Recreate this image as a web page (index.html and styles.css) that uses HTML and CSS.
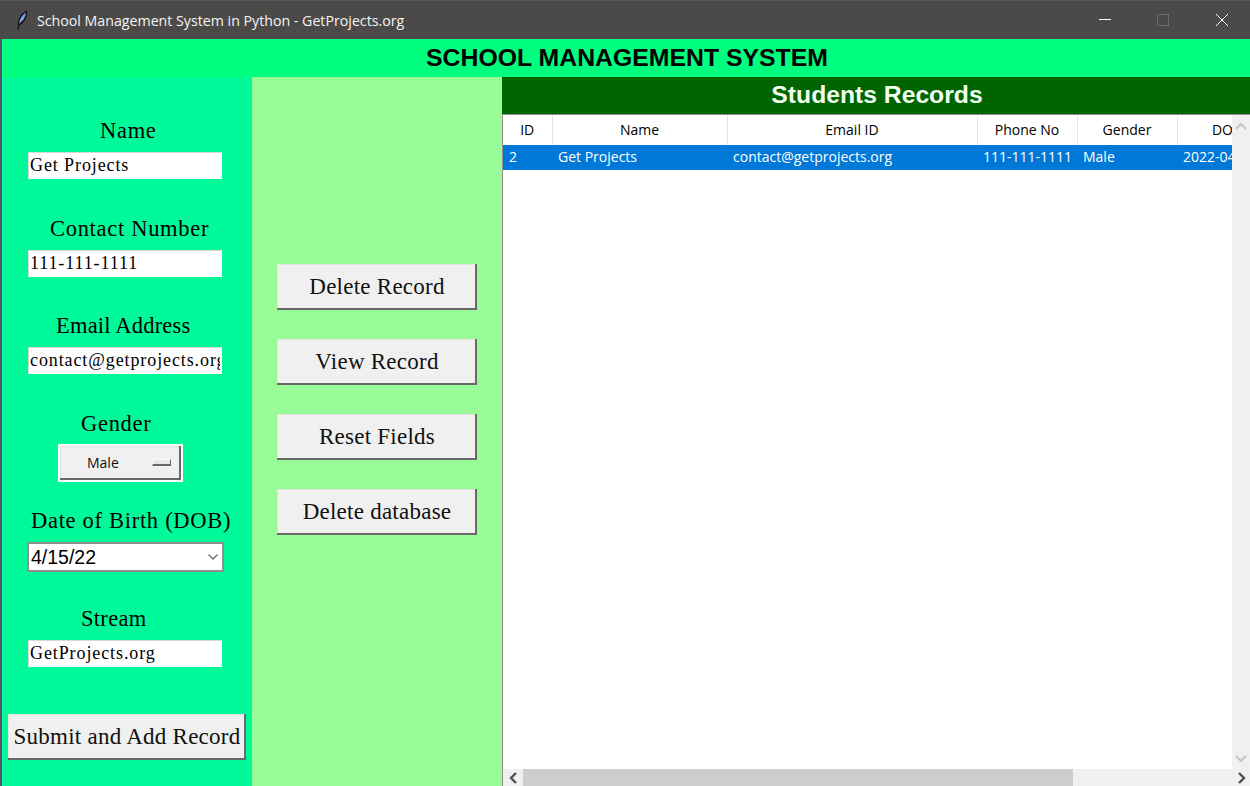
FILE: index.html
```html
<!DOCTYPE html>
<html lang="en">
<head>
    <meta charset="UTF-8">
    <meta name="viewport" content="width=device-width, initial-scale=1.0">
    <title>School Management System in Python - GetProjects.org</title>
    <link rel="stylesheet" href="styles.css">
</head>
<body>
    <div class="titlebar">
        <svg class="app-icon" width="12" height="20" viewBox="0 0 12 20">
            <path d="M1.500 19.500 L2 15 C1.500 9 5 3 11 0.500 C11.800 6 9 12.500 3.500 15.500 L2.500 19.500 Z" fill="#10131c"/>
            <path d="M3 13.500 C3.500 9 6 5 9.800 2.500 C9.800 6.500 7.500 11 3 13.500 Z" fill="#7fa3dc"/>
        </svg>
        <span class="title-text">School Management System in Python - GetProjects.org</span>
        <div class="win-buttons">
            <span class="win-btn">
                <svg width="14" height="14" viewBox="0 0 14 14"><path d="M2 6.500 H14" stroke="#fff" stroke-width="1"/></svg>
            </span>
            <span class="win-btn">
                <svg width="14" height="14" viewBox="0 0 14 14"><rect x="1.500" y="1.500" width="11" height="11" fill="none" stroke="#6e6c6a"/></svg>
            </span>
            <span class="win-btn">
                <svg width="14" height="14" viewBox="0 0 14 14"><path d="M1 1 L13 13 M13 1 L1 13" stroke="#fff" stroke-width="1"/></svg>
            </span>
        </div>
    </div>

    <div class="window">
        <h1 class="app-header">SCHOOL MANAGEMENT SYSTEM</h1>

        <div class="main">
            <div class="form-panel">
                <div class="field">
                    <label class="field-label label-name">Name</label>
                    <input class="field-input" type="text" value="Get Projects">
                </div>
                <div class="field">
                    <label class="field-label label-contact">Contact Number</label>
                    <input class="field-input" type="text" value="111-111-1111">
                </div>
                <div class="field">
                    <label class="field-label label-email">Email Address</label>
                    <input class="field-input" type="text" value="contact@getprojects.org">
                </div>
                <div class="field">
                    <label class="field-label label-gender">Gender</label>
                    <div class="option-menu">
                        <span class="option-value">Male</span>
                        <span class="option-mark"></span>
                    </div>
                </div>
                <div class="field">
                    <label class="field-label label-dob">Date of Birth (DOB)</label>
                    <div class="date-box">
                        <span>4/15/22</span>
                        <svg width="12" height="8" viewBox="0 0 12 8"><path d="M1.500 1.500 L6 6 L10.500 1.500" fill="none" stroke="#6a6a6a" stroke-width="1.300"/></svg>
                    </div>
                </div>
                <div class="field">
                    <label class="field-label label-stream">Stream</label>
                    <input class="field-input" type="text" value="GetProjects.org">
                </div>
                <button class="tk-btn submit-btn">Submit and Add Record</button>
            </div>

            <div class="action-panel">
                <button class="tk-btn action-btn">Delete Record</button>
                <button class="tk-btn action-btn">View Record</button>
                <button class="tk-btn action-btn">Reset Fields</button>
                <button class="tk-btn action-btn">Delete database</button>
            </div>

            <div class="records-panel">
                <div class="records-header">Students Records</div>
                <div class="tree-wrap">
                    <div class="tree-view">
                        <table class="tree">
                            <thead>
                                <tr>
                                    <th class="col-id">ID</th>
                                    <th class="col-name">Name</th>
                                    <th class="col-email">Email ID</th>
                                    <th class="col-phone">Phone No</th>
                                    <th class="col-gender">Gender</th>
                                    <th class="col-dob">DOB</th>
                                </tr>
                            </thead>
                            <tbody>
                                <tr class="selected">
                                    <td>2</td>
                                    <td>Get Projects</td>
                                    <td>contact@getprojects.org</td>
                                    <td>111-111-1111</td>
                                    <td>Male</td>
                                    <td>2022-04-15</td>
                                </tr>
                            </tbody>
                        </table>
                    </div>
                    <div class="vscroll">
                        <svg width="12" height="8" viewBox="0 0 12 8"><path d="M1 7 L6 2 L11 7" fill="none" stroke="#c4c4c4" stroke-width="2"/></svg>
                        <svg width="12" height="8" viewBox="0 0 12 8"><path d="M1 1 L6 6 L11 1" fill="none" stroke="#c4c4c4" stroke-width="2"/></svg>
                    </div>
                </div>
                <div class="hscroll">
                    <span class="hscroll-btn">
                        <svg width="10" height="12" viewBox="0 0 10 12"><path d="M8 1 L3 6 L8 11" fill="none" stroke="#505050" stroke-width="2.400"/></svg>
                    </span>
                    <span class="hscroll-thumb"></span>
                    <span class="hscroll-btn hscroll-end">
                        <svg width="10" height="12" viewBox="0 0 10 12"><path d="M2 1 L7 6 L2 11" fill="none" stroke="#505050" stroke-width="2.400"/></svg>
                    </span>
                </div>
            </div>
        </div>
    </div>
</body>
</html>
```

FILE: styles.css
```css
* {
    box-sizing: border-box;
}

html, body {
    height: 100%;
}

body {
    margin: 0;
    width: 1250px;
    height: 786px;
    overflow: hidden;
    display: flex;
    flex-direction: column;
    background: #00fa9a;
    font-family: "Liberation Serif", serif;
}

.titlebar {
    height: 39px;
    flex: none;
    display: flex;
    align-items: center;
    padding-left: 16px;
    background: #4c4a48;
    border-top: 1px solid #5c5a58;
    color: #fff;
    font-family: "Open Sans", sans-serif;
    font-size: 14.200px;
}

.app-icon {
    margin-right: 9px;
}

.title-text {
    color: #f4f4f4;
}

.win-buttons {
    margin-left: auto;
    margin-right: -1px;
    display: flex;
}

.win-btn {
    width: 59px;
    height: 38px;
    display: flex;
    align-items: center;
    justify-content: center;
}

.window {
    flex: 1;
    min-height: 0;
    display: flex;
    flex-direction: column;
    border-left: 2px solid #5f4d6b;
}

.app-header {
    height: 38px;
    flex: none;
    margin: 0;
    padding-left: 2px;
    background: #00ff7f;
    color: #000;
    font-family: "Liberation Sans", sans-serif;
    font-size: 24.800px;
    font-weight: bold;
    line-height: 37px;
    text-align: center;
}

.main {
    flex: 1;
    min-height: 0;
    display: flex;
}

.form-panel {
    width: 250px;
    flex: none;
    padding-top: 41px;
    background: #00fa9a;
    display: flex;
    flex-direction: column;
}

.field {
    height: 97.600px;
    flex: none;
    display: flex;
    flex-direction: column;
    align-items: flex-start;
}

.field-label {
    height: 34px;
    font-size: 22.500px;
    letter-spacing: 0.700px;
    line-height: 26px;
    color: #000;
    white-space: nowrap;
}

.label-name { margin-left: 98px; }
.label-contact { margin-left: 48px; }
.label-email { margin-left: 54px; letter-spacing: 0.200px; }
.label-gender { margin-left: 79px; }
.label-dob { margin-left: 29px; }
.label-stream { margin-left: 79px; letter-spacing: 0.300px; }

.field-input {
    width: 194px;
    height: 27px;
    margin-left: 26px;
    padding: 0 1px;
    border: 1px solid #d8d8d8;
    border-bottom-color: #fff;
    border-right-color: #fff;
    background: #fff;
    color: #000;
    font-family: "Liberation Serif", serif;
    font-size: 18px;
    letter-spacing: 0.900px;
    outline: none;
}

.option-menu {
    width: 125px;
    height: 38px;
    margin-left: 56px;
    margin-top: -1px;
    padding-left: 27px;
    padding-right: 10px;
    display: flex;
    align-items: center;
    justify-content: space-between;
    background: #f0f0f0;
    border: 2px solid #fff;
    box-shadow: inset -2px -2px 0 #696969, inset 1px 1px 0 #e3e3e3;
    font-family: "Open Sans", sans-serif;
    font-size: 14px;
    color: #111;
}

.option-mark {
    width: 19px;
    height: 7px;
    background: #e8e8e8;
    border: 1px solid #f8f8f8;
    border-right-color: #696969;
    border-bottom: 2px solid #696969;
}

.date-box {
    width: 197px;
    height: 30px;
    margin-left: 25px;
    padding: 0 3px 0 2px;
    display: flex;
    align-items: center;
    justify-content: space-between;
    background: #fff;
    border: 2px solid #8f8f8f;
    font-family: "Liberation Sans", sans-serif;
    font-size: 19.500px;
    color: #000;
}

.tk-btn {
    background: #f0f0f0;
    border: none;
    padding: 0;
    box-shadow: inset -2px -2px 0 #696969, inset 1px 1px 0 #e3e3e3;
    color: #111;
    font-family: "Liberation Serif", serif;
    font-size: 23px;
    letter-spacing: 0.250px;
    white-space: nowrap;
}

.submit-btn {
    width: 238px;
    height: 46px;
    margin-left: 6px;
    margin-top: 10px;
}

.action-panel {
    width: 250px;
    flex: none;
    padding: 187px 25px 0;
    background: #98fb98;
    display: flex;
    flex-direction: column;
    gap: 29px;
}

.action-btn {
    width: 200px;
    height: 46px;
    flex: none;
}

.records-panel {
    flex: 1;
    min-width: 0;
    display: flex;
    flex-direction: column;
    background: #fff;
}

.records-header {
    height: 37px;
    flex: none;
    padding-left: 2px;
    background: #006400;
    color: #f0fff0;
    font-family: "Liberation Sans", sans-serif;
    font-size: 24.700px;
    font-weight: bold;
    line-height: 36px;
    text-align: center;
}

.tree-wrap {
    flex: 1;
    min-height: 0;
    display: flex;
    border-top: 1px solid #909090;
    border-left: 1px solid #909090;
}

.tree-view {
    flex: 1;
    min-width: 0;
    overflow: hidden;
}

.tree {
    width: 774px;
    table-layout: fixed;
    border-collapse: collapse;
    font-family: "Open Sans", sans-serif;
    font-size: 14px;
}

.tree th {
    height: 30px;
    padding: 0 0 2px;
    font-weight: normal;
    color: #000;
    border-right: 1px solid #e5e5e5;
    background: #fff;
}

.tree td {
    height: 25px;
    padding: 0 0 2px 6px;
    white-space: nowrap;
    overflow: hidden;
}

.selected td {
    background: #0078d7;
    color: #fff;
}

.col-id { width: 49px; }
.col-name { width: 175px; }
.col-email { width: 250px; }
.col-phone { width: 100px; }
.col-gender { width: 100px; }
.col-dob { width: 100px; }

.vscroll {
    width: 18px;
    flex: none;
    padding: 7px 0 6px;
    display: flex;
    flex-direction: column;
    align-items: center;
    justify-content: space-between;
    background: #f0f0f0;
}

.hscroll {
    height: 17px;
    flex: none;
    display: flex;
    background: #f0f0f0;
    border-left: 1px solid #909090;
}

.hscroll-btn {
    width: 20px;
    flex: none;
    display: flex;
    align-items: center;
    justify-content: center;
}

.hscroll-thumb {
    width: 550px;
    flex: none;
    background: #cdcdcd;
}

.hscroll-end {
    margin-left: auto;
    width: 17px;
}
```
